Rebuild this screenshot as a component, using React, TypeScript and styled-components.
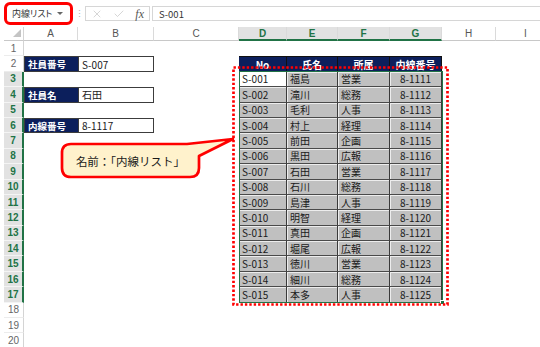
import React from 'react';
import styled, { createGlobalStyle, css } from 'styled-components';
import { X, Check } from 'lucide-react';

type Kind = 'blank' | 'label' | 'value' | 'head' | 'body' | 'active';
type Align = 'left' | 'center';

const COLS = ['A', 'B', 'C', 'D', 'E', 'F', 'G', 'H', 'I'];
const SELECTED_COLS = ['D', 'E', 'F', 'G'];
const ROWS = Array.from({ length: 20 }, (_, i) => i + 1);

const FORM: Record<number, [string, string]> = {
  2: ['社員番号', 'S-007'],
  4: ['社員名', '石田'],
  6: ['内線番号', '8-1117'],
};

const HEADS = ['No', '氏名', '所属', '内線番号'];

const STAFF = [
  ['S-001', '福島', '営業', '8-1111'],
  ['S-002', '滝川', '総務', '8-1112'],
  ['S-003', '毛利', '人事', '8-1113'],
  ['S-004', '村上', '経理', '8-1114'],
  ['S-005', '前田', '企画', '8-1115'],
  ['S-006', '黒田', '広報', '8-1116'],
  ['S-007', '石田', '営業', '8-1117'],
  ['S-008', '石川', '総務', '8-1118'],
  ['S-009', '島津', '人事', '8-1119'],
  ['S-010', '明智', '経理', '8-1120'],
  ['S-011', '真田', '企画', '8-1121'],
  ['S-012', '堀尾', '広報', '8-1122'],
  ['S-013', '徳川', '営業', '8-1123'],
  ['S-014', '細川', '総務', '8-1124'],
  ['S-015', '本多', '人事', '8-1125'],
];

function cellFor(row: number, col: number): { text: string; kind: Kind; align: Align } {
  const form = FORM[row];
  if (form && col === 0) return { text: form[0], kind: 'label', align: 'left' };
  if (form && col === 1) return { text: form[1], kind: 'value', align: 'left' };
  if (col >= 3 && col <= 6) {
    if (row === 2) return { text: HEADS[col - 3], kind: 'head', align: 'center' };
    if (row >= 3 && row <= 17) {
      return {
        text: STAFF[row - 3][col - 3],
        kind: row === 3 && col === 3 ? 'active' : 'body',
        align: col === 6 ? 'center' : 'left',
      };
    }
  }
  return { text: '', kind: 'blank', align: 'left' };
}

export default function App() {
  return (
    <>
      <GlobalStyle />
      <Page>
        <FormulaBar>
          <NameHighlight>
            <NameText>内線リスト</NameText>
            <DropArrow />
          </NameHighlight>
          <Grip>⋮</Grip>
          <FxBox>
            <X size={12} strokeWidth={1.1} color='#b4b4b4' />
            <Check size={12} strokeWidth={1.1} color='#b4b4b4' />
            <FxText>fx</FxText>
          </FxBox>
          <FormulaInput>S-001</FormulaInput>
        </FormulaBar>

        <Sheet>
          <Corner>
            <CornerTriangle />
          </Corner>
          {COLS.map(c => (
            <ColHead key={c} $selected={SELECTED_COLS.includes(c)}>
              {c}
            </ColHead>
          ))}
          {ROWS.map(r => (
            <React.Fragment key={r}>
              <RowHead $selected={r >= 3 && r <= 17}>{r}</RowHead>
              {COLS.map((c, ci) => {
                const cell = cellFor(r, ci);
                return (
                  <Cell key={c} $kind={cell.kind} $align={cell.align}>
                    {cell.text}
                  </Cell>
                );
              })}
            </React.Fragment>
          ))}
        </Sheet>

        <Selection>
          <FillHandle />
        </Selection>

        <DottedFrame>
          <svg width='220' height='243' viewBox='0 0 220 243'>
            <rect
              x='1.5'
              y='1.5'
              width='214'
              height='237'
              fill='none'
              stroke='#ff0000'
              strokeWidth='2.7'
              strokeDasharray='2.4 2'
            />
          </svg>
        </DottedFrame>

        <Callout>
          <CalloutShape width='180' height='44' viewBox='0 0 180 44'>
            <path
              d='M11 7 H127 L173 2 L139 19 V31 Q139 40 130 40 H11 Q2 40 2 31 V16 Q2 7 11 7 Z'
              fill='#fff2cc'
              stroke='#ff0000'
              strokeWidth='2.7'
              strokeLinejoin='round'
            />
          </CalloutShape>
          <CalloutText>名前：「内線リスト」</CalloutText>
        </Callout>
      </Page>
    </>
  );
}

const GlobalStyle = createGlobalStyle`
  *, *::before, *::after {
    box-sizing: border-box;
  }
  html, body {
    margin: 0;
    padding: 0;
    background: #ffffff;
  }
  body {
    font-family: "Noto Sans CJK JP", "Noto Sans", sans-serif;
    color: #1a1a1a;
  }
`;

const Page = styled.div`
  position: relative;
  width: 540px;
  height: 347px;
  overflow: hidden;
  background: #ffffff;
`;

const FormulaBar = styled.div`
  display: flex;
  align-items: center;
  height: 27px;
  padding-left: 4px;
`;

const NameHighlight = styled.div`
  display: flex;
  align-items: center;
  justify-content: space-between;
  width: 69px;
  height: 23px;
  padding: 0 7px 0 5px;
  border: 3px solid #ff0000;
  border-radius: 6px;
`;

const NameText = styled.span`
  font-size: 9px;
  color: #333333;
  white-space: nowrap;
  font-feature-settings: "palt";
`;

const DropArrow = styled.span`
  flex: none;
  width: 0;
  height: 0;
  border-left: 3px solid transparent;
  border-right: 3px solid transparent;
  border-top: 3px solid #666666;
`;

const Grip = styled.span`
  width: 12px;
  text-align: center;
  font-size: 9px;
  color: #b0b0b0;
  line-height: 1;
`;

const FxBox = styled.div`
  display: flex;
  align-items: center;
  justify-content: space-between;
  width: 65px;
  height: 15px;
  padding: 0 5px 0 5px;
  border: 1px solid #d6d6d6;
`;

const FxText = styled.span`
  font-family: "Liberation Serif", serif;
  font-style: italic;
  font-size: 12px;
  color: #555555;
  line-height: 1;
`;

const FormulaInput = styled.div`
  flex: 1;
  display: flex;
  align-items: center;
  height: 15px;
  margin-left: 2px;
  padding-left: 6px;
  border: 1px solid #d6d6d6;
  border-right: none;
  font-size: 9.5px;
  color: #333333;
`;

const Sheet = styled.div`
  display: grid;
  grid-template-columns: 20px 54px 76px 85px 48px 51px 52px 52px 54px 60px;
  grid-template-rows: 14px repeat(20, 15.4px);
  padding-left: 4px;
`;

const Corner = styled.div`
  display: flex;
  align-items: flex-end;
  justify-content: flex-end;
  padding: 0 2px 3px 0;
  border-right: 1px solid #d4d4d4;
  border-bottom: 1px solid #c8c8c8;
`;

const CornerTriangle = styled.span`
  width: 0;
  height: 0;
  border-left: 8px solid transparent;
  border-bottom: 8px solid #c4c4c4;
`;

const ColHead = styled.div<{ $selected: boolean }>`
  display: flex;
  align-items: center;
  justify-content: center;
  font-family: "Liberation Sans", "Noto Sans", sans-serif;
  font-size: 10px;
  border-right: 1px solid #dadada;
  ${p =>
    p.$selected
      ? css`
          background: #e2e2e2;
          color: #217346;
          font-weight: 700;
          border-bottom: 2px solid #217346;
        `
      : css`
          background: #ffffff;
          color: #555555;
          border-bottom: 1px solid #c8c8c8;
        `}
`;

const RowHead = styled.div<{ $selected: boolean }>`
  display: flex;
  align-items: center;
  justify-content: center;
  font-family: "Liberation Sans", "Noto Sans", sans-serif;
  font-size: 10px;
  ${p =>
    p.$selected
      ? css`
          background: #e2e2e2;
          color: #217346;
          font-weight: 700;
          border-bottom: 1px solid #f4f4f4;
          border-right: 2px solid #217346;
        `
      : css`
          background: #ffffff;
          color: #666666;
          border-bottom: 1px solid #ececec;
          border-right: 1px solid #d4d4d4;
        `}
`;

const kindStyles: Record<Kind, ReturnType<typeof css>> = {
  blank: css`
    background: #ffffff;
  `,
  label: css`
    background: #0c1f5c;
    color: #ffffff;
    font-weight: 700;
    font-size: 9.5px;
    border: 1px solid #3c3c3c;
    border-right: none;
  `,
  value: css`
    background: #ffffff;
    color: #1a1a1a;
    border: 1px solid #3c3c3c;
  `,
  head: css`
    background: #0c1f5c;
    color: #ffffff;
    font-weight: 700;
    border-right: 1px solid #111111;
    border-top: 1px solid #111111;
  `,
  body: css`
    background: #c0c0c0;
    color: #1a1a1a;
    border-right: 1px solid #3a3a3a;
    border-bottom: 1px solid #4a4a4a;
    box-shadow: inset 1px 1px 0 #ededed;
  `,
  active: css`
    background: #ffffff;
    color: #1a1a1a;
    border-right: 1px solid #3a3a3a;
    border-bottom: 1px solid #4a4a4a;
  `,
};

const Cell = styled.div<{ $kind: Kind; $align: Align }>`
  display: flex;
  align-items: center;
  justify-content: ${p => (p.$align === 'center' ? 'center' : 'flex-start')};
  padding: 0 3px;
  font-size: 10px;
  white-space: nowrap;
  overflow: hidden;
  ${p => kindStyles[p.$kind]}
`;

const Selection = styled.div`
  position: absolute;
  left: 239px;
  top: 71px;
  width: 204px;
  height: 232px;
  border: 1px solid #217346;
  pointer-events: none;
`;

const FillHandle = styled.span`
  position: absolute;
  right: -3px;
  bottom: -3px;
  width: 5px;
  height: 5px;
  background: #217346;
  border: 1px solid #ffffff;
`;

const DottedFrame = styled.div`
  position: absolute;
  left: 232px;
  top: 66px;
  width: 220px;
  height: 243px;
  pointer-events: none;

  svg {
    display: block;
  }
`;

const Callout = styled.div`
  position: absolute;
  left: 60px;
  top: 137px;
  width: 180px;
  height: 44px;
`;

const CalloutShape = styled.svg`
  position: absolute;
  left: 0;
  top: 0;
`;

const CalloutText = styled.div`
  position: relative;
  display: flex;
  align-items: center;
  justify-content: center;
  width: 137px;
  height: 33px;
  margin: 7px 0 0 2px;
  font-size: 11.5px;
  color: #1a1a1a;
`;
